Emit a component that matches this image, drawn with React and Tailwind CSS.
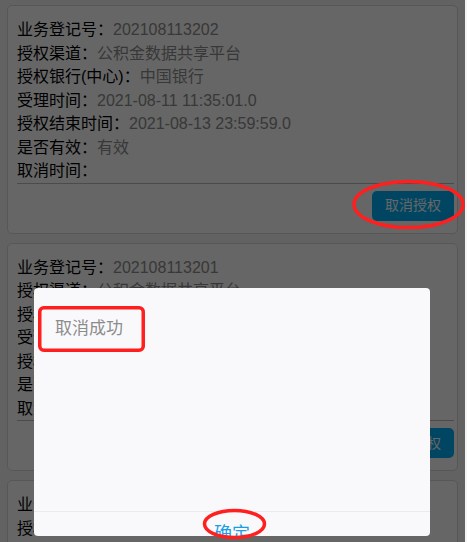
import React from "react";

const cards = [
  [
    ["业务登记号：", "202108113202"],
    ["授权渠道：", "公积金数据共享平台"],
    ["授权银行(中心)：", "中国银行"],
    ["受理时间：", "2021-08-11 11:35:01.0"],
    ["授权结束时间：", "2021-08-13 23:59:59.0"],
    ["是否有效：", "有效"],
    ["取消时间：", ""],
  ],
  [
    ["业务登记号：", "202108113201"],
    ["授权渠道：", "公积金数据共享平台"],
    ["授权银行(中心)：", "中国银行"],
    ["受理时间：", "2021-08-11 11:30:12.0"],
    ["授权结束时间：", "2021-08-13 23:59:59.0"],
    ["是否有效：", "有效"],
    ["取消时间：", ""],
  ],
  [
    ["业务登记号：", "202108113200"],
    ["授权渠道：", "公积金数据共享平台"],
    ["授权银行(中心)：", "中国银行"],
    ["受理时间：", "2021-08-11 11:20:45.0"],
    ["授权结束时间：", "2021-08-13 23:59:59.0"],
    ["是否有效：", "有效"],
    ["取消时间：", ""],
  ],
];

function Card({ rows }) {
  return (
    <div className="shrink-0 rounded-[5px] border border-[#dadada] bg-white pl-[9px] pr-[3px] pt-[12px] pb-[12px]">
      <div className="border-b border-[#bcbcbc] text-[16px] leading-[23.5px]">
        {rows.map(([k, v]) => (
          <div key={k} className="whitespace-nowrap">
            <span className="text-black">{k}</span>
            <span className="text-[#8c8c8c]">{v}</span>
          </div>
        ))}
      </div>
      <div className="mt-[7px] flex justify-end">
        <button className="h-[30px] w-[82px] rounded-[5px] bg-[#00aff7] text-[14px] text-white">
          取消授权
        </button>
      </div>
    </div>
  );
}

export default function App() {
  return (
    <div className="relative h-[542px] w-[467px] overflow-hidden bg-[#f5f5f5] font-['Liberation_Sans','Noto_Sans_CJK_SC',sans-serif]">
      <div className="flex w-[465px] flex-col gap-[9px] px-[7px] pt-[5px]">
        {cards.map((rows, i) => (
          <Card key={i} rows={rows} />
        ))}
      </div>

      <div className="absolute inset-y-0 left-0 w-[465px] bg-black/60" />

      <div className="absolute left-[34px] top-[288px] flex h-[248px] w-[396px] flex-col overflow-hidden rounded-[4px] bg-[#f9f9fb]">
        <div className="h-[223px] shrink-0 pl-[21px] pt-[29px] text-[17px] leading-[24px] text-[#8c8c8c]">
          取消成功
        </div>
        <div className="h-[44px] shrink-0 border-t border-[#ebebeb] text-center text-[18px] leading-[44px] text-[#1a9de6]">
          确定
        </div>
      </div>

      <svg
        className="pointer-events-none absolute inset-0"
        width="467"
        height="542"
        viewBox="0 0 467 542"
      >
        <ellipse cx="408.5" cy="204.5" rx="54.5" ry="23" fill="none" stroke="#ff1f1f" strokeWidth="3.5" />
        <rect x="39.75" y="307.75" width="103.5" height="42.5" rx="4" fill="none" stroke="#ff1f1f" strokeWidth="3.5" />
        <ellipse cx="234.5" cy="524" rx="30" ry="13.5" fill="none" stroke="#ff1f1f" strokeWidth="3.5" />
      </svg>
    </div>
  );
}
